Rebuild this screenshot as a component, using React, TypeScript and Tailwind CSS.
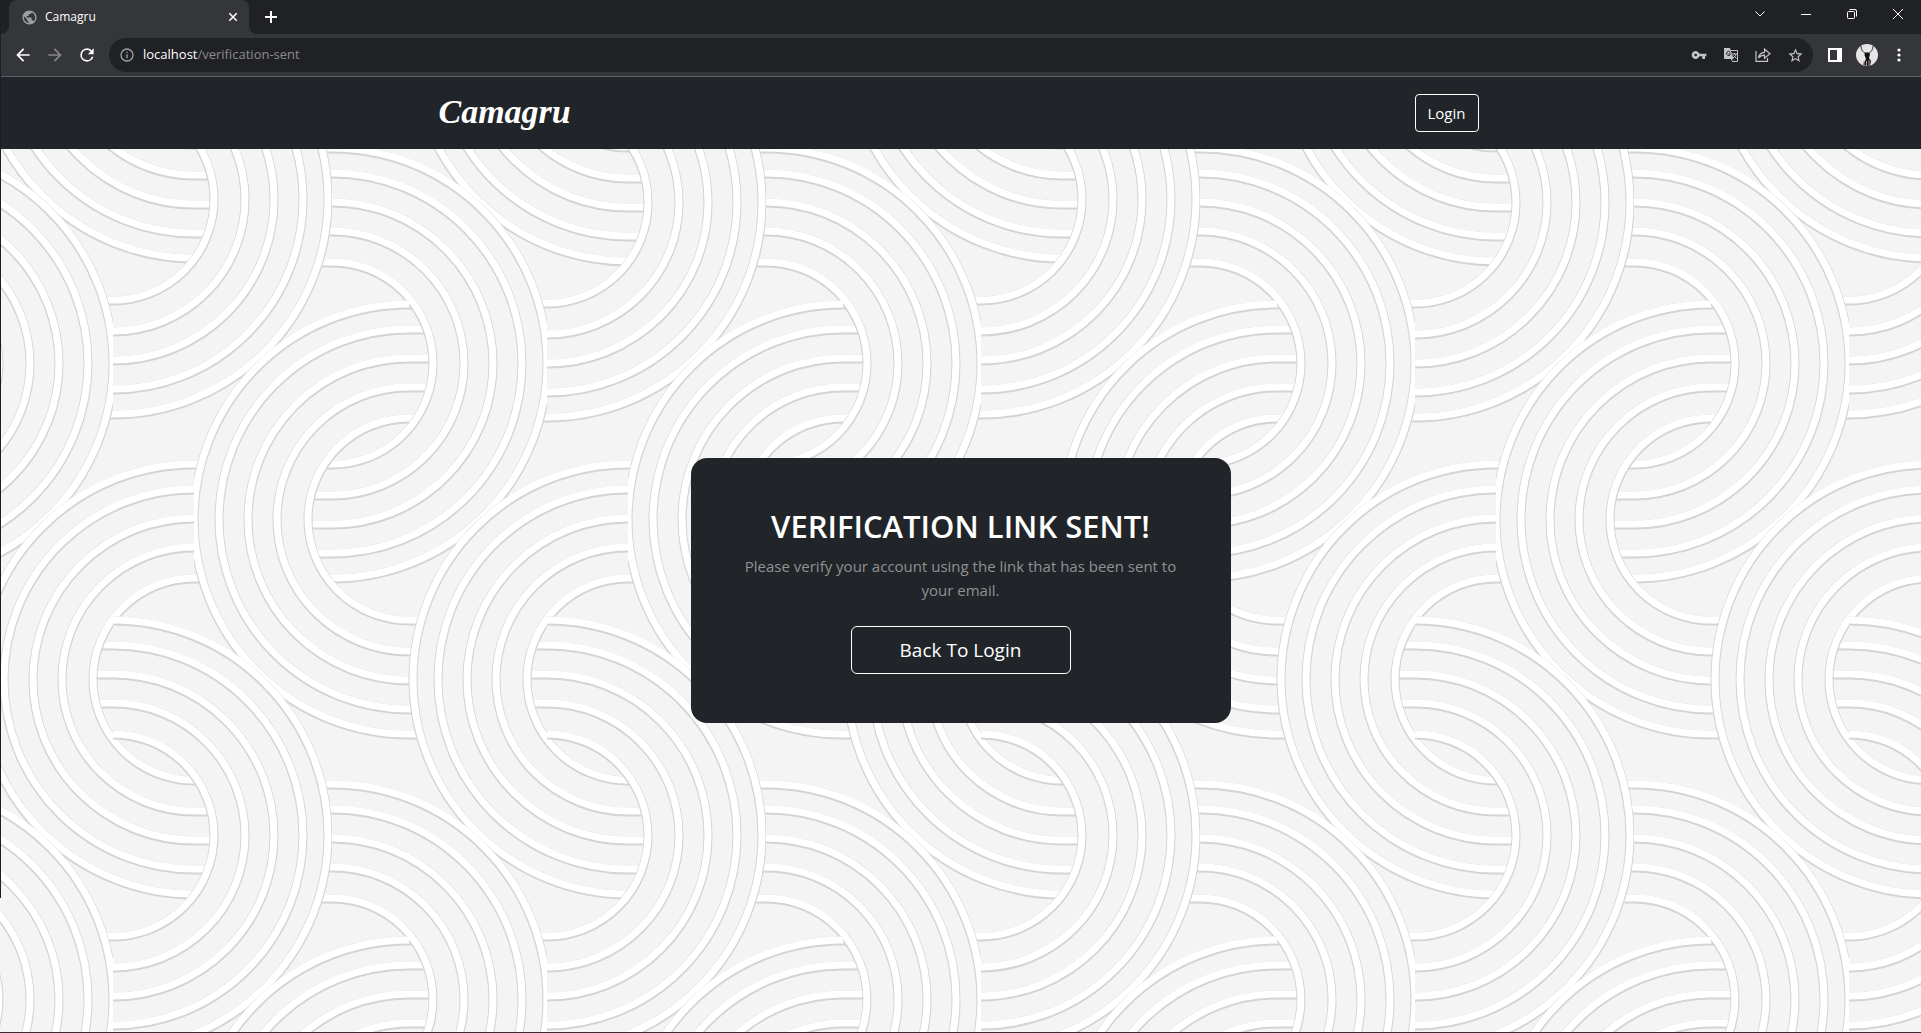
import React from "react";

const RADII = [101, 132, 161, 190, 215];

type Half = { x: number; y: number; side: 1 | -1 };

const HALVES: Half[] = [
  { x: 113, y: 199, side: 1 },
  { x: 332, y: 363, side: 1 },
  { x: 409, y: 519, side: -1 },
  { x: 194, y: 679, side: -1 },
];
const PERIOD_X = 434;
const PERIOD_Y = 636;

const halves: Half[] = [];
for (let j = -1; j <= 1; j++) {
  for (let i = -1; i <= 4; i++) {
    for (const h of HALVES) {
      const y = h.y + j * PERIOD_Y;
      // Odd columns of the first row hang slightly lower than their neighbours.
      const drop = y < 210 && i % 2 !== 0 ? 3 : 0;
      halves.push({ x: h.x + i * PERIOD_X, y: y + drop, side: h.side });
    }
  }
}

const arc = (h: Half, r: number, dy = 0) =>
  `M${h.x} ${h.y - r + dy}A${r} ${r} 0 0 ${h.side === 1 ? 1 : 0} ${h.x} ${h.y + r + dy}`;

const tails = (h: Half, dy = 0) =>
  RADII.map(
    (r) =>
      `M${h.x + h.side} ${h.y - r + dy}h${-26 * h.side}M${h.x + h.side} ${h.y + r + dy}h${-26 * h.side}`
  ).join("");

function Backdrop() {
  return (
    <svg
      className="absolute inset-0 h-full w-full"
      viewBox="0 149 1921 883"
      preserveAspectRatio="xMinYMin slice"
      fill="none"
      aria-hidden="true"
    >
      {halves.map((h, i) => (
        <g key={"t" + i}>
          <path d={tails(h, 1)} stroke="#d4d4d4" strokeWidth="9" />
          <path d={tails(h)} stroke="#fff" strokeWidth="7" />
        </g>
      ))}
      {halves.map((h, i) => (
        <g key={"h" + i}>
          <path d={arc(h, 158)} stroke="#f4f4f4" strokeWidth="114" />
          <path d={RADII.map((r) => arc(h, r, 1)).join("")} stroke="#d4d4d4" strokeWidth="9" />
          <path d={RADII.map((r) => arc(h, r)).join("")} stroke="#fff" strokeWidth="7" />
        </g>
      ))}
    </svg>
  );
}

function Icon({ d, className, box = 24 }: { d: string; className: string; box?: number }) {
  return (
    <svg viewBox={`0 0 ${box} ${box}`} className={className} fill="currentColor" aria-hidden="true">
      <path d={d} />
    </svg>
  );
}

const BTN = "grid h-8 w-8 shrink-0 place-items-center";

function TabStrip() {
  return (
    <div className="flex h-[34px] bg-[#202124] pl-px text-white">
      <div className="flex w-2 items-end bg-[#35363a]">
        <span className="h-full w-full rounded-br-lg bg-[#202124]" />
      </div>
      <div className="flex w-60 items-center rounded-t-lg bg-[#35363a] pl-3 pr-2">
        <Icon
          className="h-[17px] w-[17px] text-[#9aa0a6]"
          d="M12 2a10 10 0 1 0 0 20 10 10 0 0 0 0-20zm-1 17.9A8 8 0 0 1 4.2 10.2L9 15v1a2 2 0 0 0 2 2zm6.900-2.500A2 2 0 0 0 16 16h-1v-3a1 1 0 0 0-1-1H8v-2h2a1 1 0 0 0 1-1V7h2a2 2 0 0 0 2-2v-.4a8 8 0 0 1 2.900 12.800z"
        />
        <span className="ml-[7px] font-['Open_Sans',sans-serif] text-xs">Camagru</span>
        <button aria-label="Close tab" className="ml-auto grid h-4 w-4 place-items-center">
          <svg viewBox="0 0 8 8" className="h-2 w-2" stroke="currentColor" strokeWidth="1.5">
            <path d="M0 0l8 8M8 0L0 8" />
          </svg>
        </button>
      </div>
      <div className="flex w-2 bg-[#35363a]">
        <span className="h-full w-full rounded-bl-lg bg-[#202124]" />
      </div>
      <button aria-label="New tab" className="ml-1 grid h-[34px] w-[20px] place-items-center">
        <svg viewBox="0 0 12 12" className="h-3 w-3" stroke="currentColor" strokeWidth="2">
          <path d="M6 0v12M0 6h12" />
        </svg>
      </button>
      <div className="ml-auto flex h-7 items-center">
        <button aria-label="Search tabs" className="grid h-7 w-[46px] place-items-center">
          <svg viewBox="0 0 10 6" className="h-1.5 w-2.5" fill="none" stroke="currentColor">
            <path d="M.5.5L5 5 9.500.5" />
          </svg>
        </button>
        <button aria-label="Minimize" className="grid h-7 w-[46px] place-items-center">
          <span className="h-px w-2.5 bg-white" />
        </button>
        <button aria-label="Restore" className="grid h-7 w-[46px] place-items-center">
          <svg viewBox="0 0 10 10" className="h-2.5 w-2.5" fill="none" stroke="currentColor">
            <rect x=".5" y="2.500" width="7" height="7" rx="1" />
            <path d="M2.500.5H8A1.500 1.500 0 0 1 9.500 2v5.500" />
          </svg>
        </button>
        <button aria-label="Close" className="grid h-7 w-[46px] place-items-center">
          <svg viewBox="0 0 10 10" className="h-2.5 w-2.5" stroke="currentColor">
            <path d="M0 0l10 10M10 0L0 10" />
          </svg>
        </button>
      </div>
    </div>
  );
}

function Toolbar() {
  return (
    <div className="flex h-[43px] items-center border-b border-[#5f6368] bg-[#35363a] pl-[7px] pr-[6px] text-white">
      <button aria-label="Back" className={BTN}>
        <Icon className="h-5 w-5" d="M20 11H7.830l5.590-5.590L12 4l-8 8 8 8 1.410-1.410L7.830 13H20v-2z" />
      </button>
      <button aria-label="Forward" className={BTN + " text-[#86878a]"}>
        <Icon className="h-5 w-5" d="M12 4l-1.410 1.410L16.170 11H4v2h12.170l-5.580 5.590L12 20l8-8z" />
      </button>
      <button aria-label="Reload" className={BTN}>
        <Icon
          className="h-5 w-5"
          d="M17.650 6.350A7.960 7.960 0 0 0 12 4a8 8 0 1 0 7.730 10h-2.080A6 6 0 1 1 12 6c1.660 0 3.140.69 4.220 1.780L13 11h7V4l-2.350 2.350z"
        />
      </button>
      <div className="ml-1.5 flex h-[34px] grow items-center rounded-full bg-[#202124] pl-[10px] pr-[2px] text-[#c3c4c6]">
        <Icon
          className="h-4 w-4 text-[#9aa0a6]"
          d="M11 7h2v2h-2zm0 4h2v6h-2zm1-9a10 10 0 1 0 0 20 10 10 0 0 0 0-20zm0 18a8 8 0 1 1 0-16 8 8 0 0 1 0 16z"
        />
        <span className="ml-2 grow font-['Open_Sans',sans-serif] text-[13px] text-[#8b8c8f]">
          <span className="text-white">localhost</span>/verification-sent
        </span>
        <button aria-label="Passwords" className={BTN}>
          <Icon
            className="h-4 w-4"
            d="M12.650 10A6 6 0 1 0 12.650 14H17v4h4v-4h2v-4H12.650zM7 14a2 2 0 1 1 0-4 2 2 0 0 1 0 4z"
          />
        </button>
        <button aria-label="Translate" className={BTN}>
          <svg viewBox="0 0 14 14" className="h-3.5 w-3.5" fill="none" stroke="currentColor">
            <path d="M0 0h6l3.500 11H1a1 1 0 0 1-1-1z" fill="currentColor" stroke="none" />
            <path d="M7 2.500h6.500v11h-5L7.500 11M8 6h5M10.500 5v1M12 6c-.5 2-1.500 3-3 4M9.500 7.500l3 3" />
            <path d="M6.200 4.300A2 2 0 1 0 6.500 6H4.500" stroke="#202124" />
          </svg>
        </button>
        <button aria-label="Share" className={BTN}>
          <svg viewBox="0 0 16 14" className="h-3.5 w-4" fill="none" stroke="currentColor" strokeWidth="1.200">
            <path d="M1 3v10.400h11.500V10" />
            <path d="M3.500 10c.5-3.500 2.500-5.500 6-5.700V1l5.500 4.700-5.500 4.600V7.200c-2.700 0-4.500.8-6 2.800z" />
          </svg>
        </button>
        <button aria-label="Bookmark" className={BTN}>
          <Icon
            className="h-[17px] w-[17px]"
            d="M22 9.240l-7.190-.62L12 2 9.190 8.630 2 9.240l5.460 4.730L5.820 21 12 17.270 18.180 21l-1.630-7.030L22 9.240zM12 15.400l-3.760 2.270 1-4.280-3.320-2.880 4.380-.38L12 6.100l1.710 4.040 4.380.38-3.320 2.880 1 4.280L12 15.400z"
          />
        </button>
      </div>
      <button aria-label="Side panel" className={BTN + " ml-1.5"}>
        <Icon box={14} className="h-3.5 w-3.5" d="M0 0h14v14H0zM2 2v10h7V2z" />
      </button>
      <button aria-label="Profile" className={BTN}>
        <svg viewBox="0 0 22 22" className="h-[22px] w-[22px]">
          <circle cx="11" cy="11" r="11" fill="#e6e4e4" />
          <path d="M5 2c0 4 2 6 5 8M17 2c0 4-2 6-5 8" stroke="#333" fill="none" />
          <path d="M9 8.500h4l1 2-1 3.500 2 3-1 4.500q-5 1-7-1l3-5.500-1.500-4z" fill="#111" />
          <path d="M8 17v4.500M10.500 17v5M13 16v5.500" stroke="#b79a98" />
        </svg>
      </button>
      <button aria-label="Menu" className={BTN}>
        <svg viewBox="0 0 4 14" className="h-3.5 w-1" fill="currentColor">
          <circle cx="2" cy="2" r="1.600" />
          <circle cx="2" cy="7" r="1.600" />
          <circle cx="2" cy="12" r="1.600" />
        </svg>
      </button>
    </div>
  );
}

export default function App() {
  return (
    <div className="relative flex min-h-screen flex-col border-b border-[#3a2c36] bg-[#f4f4f4] font-['Open_Sans',sans-serif]">
      <TabStrip />
      <Toolbar />
      <header className="bg-[#212529] pr-1">
        <nav className="mx-auto flex h-[72px] w-full max-w-[1040px] items-center justify-between">
          <a href="#" className="pb-1 font-['Liberation_Serif',serif] text-[34px] font-bold italic text-white">
            Camagru
          </a>
          <button className="h-[38px] rounded border border-white px-3 text-[15px] text-white">Login</button>
        </nav>
      </header>
      <main className="relative flex grow items-center justify-center overflow-hidden">
        <Backdrop />
        <section className="relative flex w-[540px] flex-col items-center rounded-2xl bg-[#212529] px-12 pb-[49px] pt-12 text-center">
          <h1 className="text-[31px] font-semibold leading-10 text-white">VERIFICATION LINK SENT!</h1>
          <p className="mt-2 text-[15px] leading-6 text-[#8f9193]">
            Please verify your account using the link that has been sent to your email.
          </p>
          <button className="mt-6 h-12 w-[220px] rounded-md border border-white text-[19px] text-white">
            Back To Login
          </button>
        </section>
      </main>
      <span className="absolute left-0 top-0 h-[87%] w-px bg-[#1f1b2e]" aria-hidden="true" />
    </div>
  );
}
